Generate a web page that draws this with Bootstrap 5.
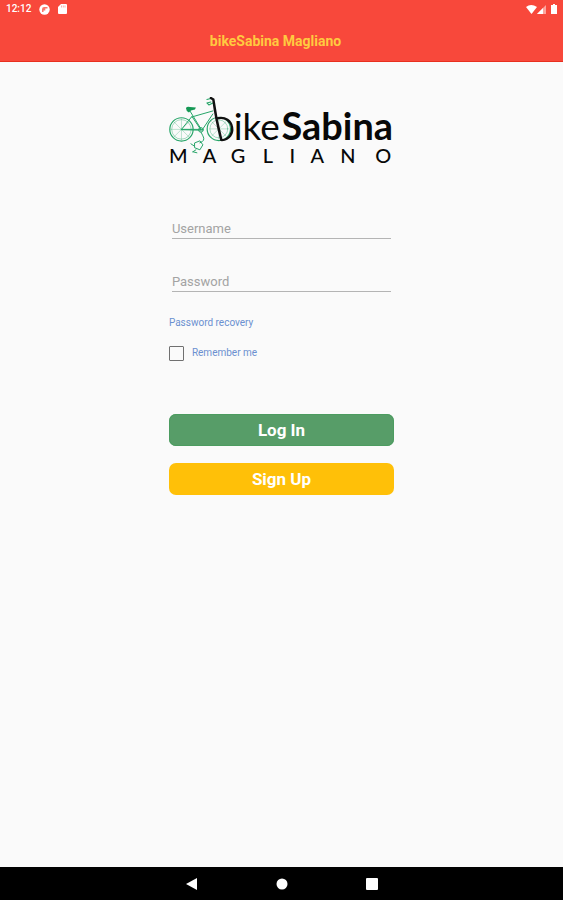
<!DOCTYPE html>
<html lang="en">
<head>
<meta charset="utf-8">
<meta name="viewport" content="width=device-width, initial-scale=1">
<title>bikeSabina Magliano</title>
<link href="https://cdn.jsdelivr.net/npm/bootstrap@5.3.0/dist/css/bootstrap.min.css" rel="stylesheet">
<style>
  body { font-family: Roboto, sans-serif; background: #fafafa; }
  .app-top { background: #f8483b; border-bottom: 1px solid #e8301f; }
  .status-bar { height: 18px; padding: 0 5px 0 6px; font-size: 10px; line-height: 18px; font-weight: 500; }
  .app-title { font-size: 14px; line-height: 20px; padding: 13px 12px 10px 0; font-weight: 700; color: #ffca40; }
  .login-panel { width: 40%; min-width: 225px; padding-top: 35px; }
  .logo { margin-bottom: 46px; }
  .line-input { border: 0; border-bottom: 1px solid #b4b4b4; border-radius: 0; background: transparent; padding: 0; font-size: 13px; line-height: 19px; height: 20px; min-height: 0; }
  .line-input:focus { background: transparent; box-shadow: none; border-color: #579d68; }
  .line-input::placeholder { color: #a3a3a3; }
  .field { padding: 0 3px; margin-bottom: 33px; }
  .small-link { font-size: 10px; line-height: 14px; color: #6b90d0; }
  .recovery { margin-top: -9px; margin-bottom: 16px; }
  .remember { margin-bottom: 53px; }
  .remember .form-check-input { width: 15px; height: 15px; border: 1px solid #707070; border-radius: 1px; background-color: transparent; }
  .btn-app { height: 32px; padding: 0; border: 0; border-radius: 7px; font-size: 17px; line-height: 32px; font-weight: 700; color: #fff; }
  .btn-login { background: #579d68; margin-bottom: 17px; box-shadow: inset 0 0 0 1px #4c9c60; }
  .btn-signup { background: #ffc008; }
  .btn-app:hover { color: #fff; filter: brightness(.95); }
  .system-nav { height: 33px; background: #000; gap: 72px; }
  .system-nav .btn { width: 18px; height: 18px; line-height: 0; }
  .logo-text { font-family: Lato, sans-serif; }
</style>
</head>
<body class="d-flex flex-column min-vh-100">
<header class="app-top">
  <div class="status-bar d-flex align-items-center justify-content-between text-white">
    <div class="d-flex align-items-center">
      <span class="me-2">12:12</span>
      <svg width="11" height="11" viewBox="0 0 11 11" class="me-2" aria-hidden="true"><circle cx="5.5" cy="5.5" r="5.2" fill="#fff"/><path d="M3 8V5.200Q3 3 5.200 3H8.500V4.500H6.300V6.400H4.500V8Z" fill="#f8483b" opacity=".75"/></svg>
      <svg width="9" height="10" viewBox="0 0 9 10" aria-hidden="true"><path d="M3 0H8Q9 0 9 1V9Q9 10 8 10H1Q0 10 0 9V3Z" fill="#fff"/><path d="M3.500 1.500V3.500M5.300 1.500V3.500M7 1.500V3.500" stroke="#f8483b" stroke-width=".7" opacity=".6"/></svg>
    </div>
    <svg width="34" height="11" viewBox="0 0 34 11" aria-hidden="true"><path d="M2 3Q7-1 13 3L7.500 10Z" fill="#fff"/><path d="M13 10 22 1V10Z" fill="#fff" opacity=".5"/><path d="M13 10 19 4V10Z" fill="#fff"/><path d="M27 1H29V0H31V1H33V10H27Z" fill="#fff"/></svg>
  </div>
  <h1 class="app-title text-center m-0">bikeSabina Magliano</h1>
</header>

<main class="login-panel mx-auto flex-grow-1">
  <svg class="logo d-block w-100" viewBox="0 0 226 76" role="img" aria-label="bikeSabina Magliano">
    <g fill="none" stroke="#26a568" stroke-linecap="round" stroke-linejoin="round">
      <circle cx="12.500" cy="32.500" r="11.700" stroke-width="1.200"/>
      <circle cx="12.500" cy="32.500" r="9.800" stroke-width=".4"/>
      <circle cx="50" cy="32" r="11.700" stroke-width="1.200"/>
      <circle cx="50" cy="32" r="9" stroke-width=".4"/>
      <path d="M12.500 22V43M2 32.500H23M5 25 20 40M20 25 5 40M50 23V42M41 32H59M43 25 57 39M57 25 43 39" stroke-width=".3"/>
      <path d="M12.500 32.500 23 19.500 32 33ZM21 14 33 33.500 44 17M23 20 44 14M12.500 32.500H32" stroke-width="1"/>
      <circle cx="32" cy="33" r="2.300" stroke-width="1"/>
      <path d="M32 35 34 39Q37 44 31 46" stroke-width="1"/>
      <path d="M26 46 31 44 34 48 31 53 26 51ZM25 49 22 47M27 53 24 55M24 55 28 56" stroke-width="1"/>
      <path d="M42 1.500 38 2.500M42 5 38 6 40 8 44 6" stroke-width="1.100"/>
    </g>
    <path d="M17 11Q18 9.500 21 10L27 10.500 26 12.500 22 13.500 20 15.500Q17 14 17 11Z" fill="#159854"/>
    <g fill="none" stroke="#111" stroke-linecap="round">
      <path d="M42 1 44.500 2.500Q47 22 52.500 43" stroke-width="2.400"/>
      <path d="M48 21.500C66 17 69 42 53 43.300" stroke-width="2.400"/>
    </g>
    <g class="logo-text" fill="#080808">
      <text x="65" y="43" font-size="37" font-weight="400">ike</text>
      <text x="113" y="43" font-size="38" font-weight="700">Sabina</text>
      <text x="0 34 62 94 121 142 172 207" y="66" font-size="20" font-weight="500">MAGLIANO</text>
    </g>
  </svg>

  <form>
    <div class="field">
      <label class="visually-hidden" for="username">Username</label>
      <input class="form-control line-input" id="username" type="text" placeholder="Username">
    </div>
    <div class="field">
      <label class="visually-hidden" for="password">Password</label>
      <input class="form-control line-input" id="password" type="password" placeholder="Password">
    </div>
    <a href="#" class="recovery small-link d-block text-decoration-none">Password recovery</a>
    <div class="remember d-flex align-items-center gap-2">
      <input class="form-check-input m-0" type="checkbox" id="remember">
      <label class="small-link" for="remember">Remember me</label>
    </div>
    <button type="submit" class="btn btn-app btn-login w-100 d-block">Log In</button>
    <button type="button" class="btn btn-app btn-signup w-100 d-block">Sign Up</button>
  </form>
</main>

<nav class="system-nav d-flex justify-content-center align-items-center" aria-label="System">
  <button type="button" class="btn p-0 border-0" aria-label="Back"><svg width="18" height="18" viewBox="0 0 18 18"><path d="M3 9 14 3V15Z" fill="#fff"/></svg></button>
  <button type="button" class="btn p-0 border-0" aria-label="Home"><svg width="18" height="18" viewBox="0 0 18 18"><circle cx="9" cy="9" r="5.500" fill="#fff"/></svg></button>
  <button type="button" class="btn p-0 border-0" aria-label="Recent apps"><svg width="18" height="18" viewBox="0 0 18 18"><rect x="3" y="3" width="12" height="12" rx="1" fill="#fff"/></svg></button>
</nav>
<script src="https://cdn.jsdelivr.net/npm/bootstrap@5.3.0/dist/js/bootstrap.bundle.min.js"></script>
</body>
</html>
